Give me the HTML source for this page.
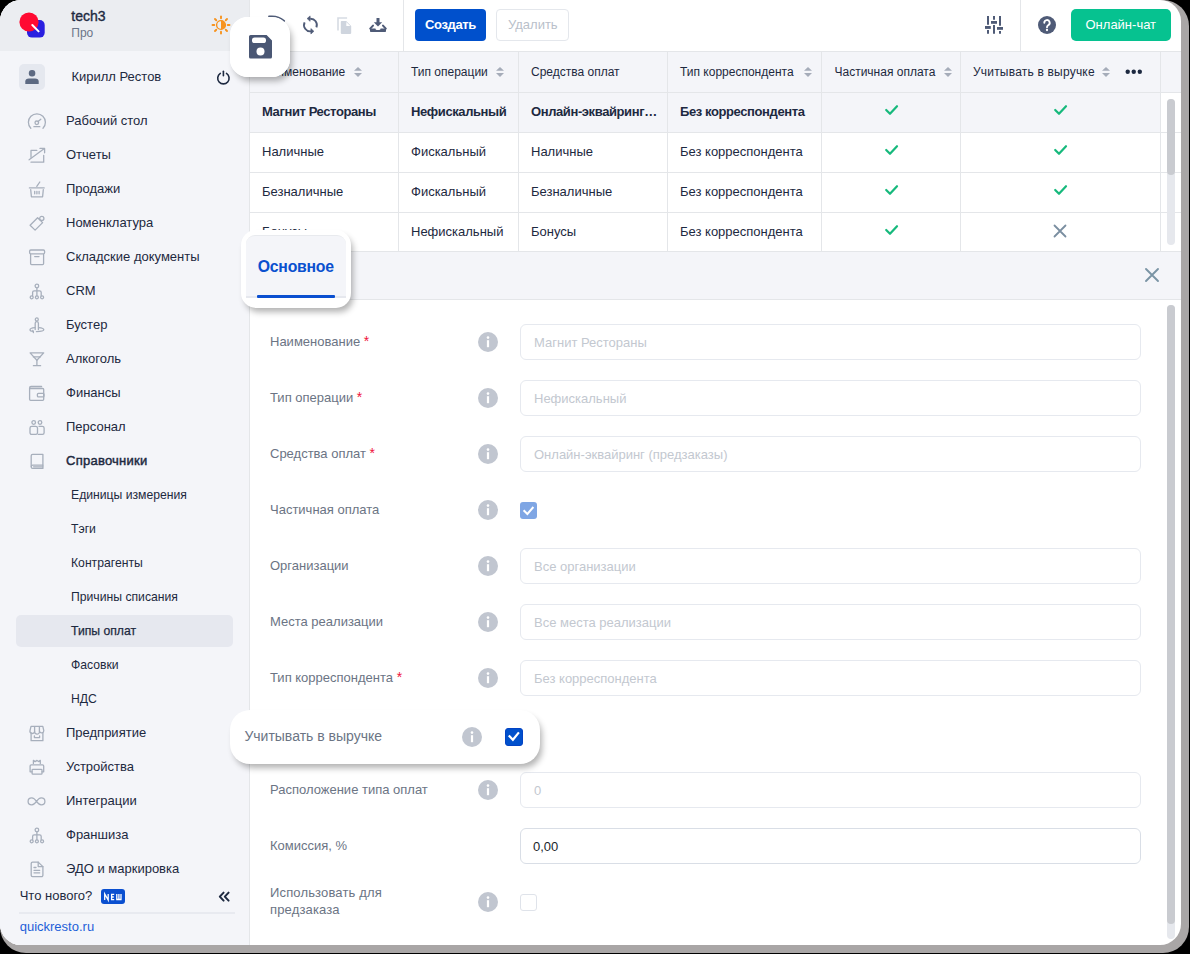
<!DOCTYPE html>
<html><head><meta charset="utf-8"><style>
*{box-sizing:border-box;margin:0;padding:0}
html,body{width:1190px;height:954px;overflow:hidden;background:#000;font-family:"Liberation Sans",sans-serif;}
#shadow{position:absolute;left:0;top:0;width:1189px;height:953px;border-radius:26px;background:#a9a6a6}
#win{position:absolute;left:0;top:0;width:1181px;height:945px;border-radius:21px;background:#fff;overflow:hidden}
.t{position:absolute;white-space:nowrap;line-height:13px;font-size:13px;color:#1d2940}
svg{position:absolute;overflow:visible}
.bx{position:absolute}
</style></head><body><div id="shadow"></div><div id="win"><div class="bx" style="left:0px;top:0px;width:249px;height:945px;background:#f4f5f9"></div>
<div class="bx" style="left:249px;top:0px;width:1px;height:945px;background:#e4e6e9"></div>
<div class="bx" style="left:0px;top:0px;width:249px;height:51px;background:#ebedf1"></div>
<svg style="left:0px;top:0px" width="60" height="48" viewBox="0 0 60 48"><rect x="27" y="20" width="17.7" height="17.6" rx="5" fill="#2a1fe0"/><circle cx="29" cy="22" r="9.6" fill="#ff0a32"/><line x1="32.3" y1="25" x2="38.6" y2="31.4" stroke="#fff" stroke-width="2" stroke-linecap="round"/></svg>
<div class="t" style="left:71.30px;top:9.149px;font-size:14px;line-height:14px;color:#1d2940;font-weight:normal;-webkit-text-stroke:0.35px #1d2940;">tech3</div>
<div class="t" style="left:71.30px;top:26.842px;font-size:12px;line-height:12px;color:#6b7588;font-weight:normal;">Про</div>
<svg style="left:210.9px;top:14.9px" width="20" height="20" viewBox="0 0 20 20"><circle cx="10" cy="10" r="4.4" fill="none" stroke="#f7931e" stroke-width="1.4"/><path d="M10 5.6 A4.4 4.4 0 0 1 10 14.4 Z" fill="#f7931e"/><line x1="16.70" y1="10.00" x2="18.50" y2="10.00" stroke="#f7931e" stroke-width="1.9" stroke-linecap="round"/><line x1="14.74" y1="14.74" x2="16.01" y2="16.01" stroke="#f7931e" stroke-width="1.9" stroke-linecap="round"/><line x1="10.00" y1="16.70" x2="10.00" y2="18.50" stroke="#f7931e" stroke-width="1.9" stroke-linecap="round"/><line x1="5.26" y1="14.74" x2="3.99" y2="16.01" stroke="#f7931e" stroke-width="1.9" stroke-linecap="round"/><line x1="3.30" y1="10.00" x2="1.50" y2="10.00" stroke="#f7931e" stroke-width="1.9" stroke-linecap="round"/><line x1="5.26" y1="5.26" x2="3.99" y2="3.99" stroke="#f7931e" stroke-width="1.9" stroke-linecap="round"/><line x1="10.00" y1="3.30" x2="10.00" y2="1.50" stroke="#f7931e" stroke-width="1.9" stroke-linecap="round"/><line x1="14.74" y1="5.26" x2="16.01" y2="3.99" stroke="#f7931e" stroke-width="1.9" stroke-linecap="round"/></svg>
<div class="bx" style="left:19.4px;top:64.2px;width:25.4px;height:25.7px;background:#e5e8ef;border-radius:5px"></div>
<svg style="left:19px;top:64px" width="26" height="26" viewBox="0 0 26 26"><rect x="9.8" y="6" width="6.5" height="6.4" rx="3" fill="#5d6a82"/><path d="M6.3 19.9 V17.6 Q6.3 14.5 10 14.5 H16 Q19.7 14.5 19.7 17.6 V19.9 Z" fill="#5d6a82"/></svg>
<div class="t" style="left:71.40px;top:69.995px;font-size:13px;line-height:13px;color:#1d2940;font-weight:normal;">Кирилл Рестов</div>
<svg style="left:214px;top:69px" width="18" height="18" viewBox="0 0 18 18"><path d="M6.3 4.4 A5.7 5.7 0 1 0 12.5 4.4" fill="none" stroke="#1d2940" stroke-width="1.6" stroke-linecap="round"/><line x1="9.4" y1="2.3" x2="9.4" y2="6.7" stroke="#1d2940" stroke-width="1.6" stroke-linecap="round"/></svg>
<svg style="left:27px;top:111px" width="20" height="20" viewBox="0 0 20 20"><path d="M3.8 17.2 A8.5 8.5 0 1 1 16 17.2" fill="none" stroke="#a7afbc" stroke-width="1.3" stroke-linecap="round" stroke-linejoin="round"/><circle cx="9.8" cy="11.8" r="1.8" fill="none" stroke="#a7afbc" stroke-width="1.3" stroke-linecap="round" stroke-linejoin="round"/><line x1="11.1" y1="10.5" x2="13.8" y2="8.2" fill="none" stroke="#a7afbc" stroke-width="1.3" stroke-linecap="round" stroke-linejoin="round"/><line x1="6.9" y1="15.7" x2="12.8" y2="15.7" fill="none" stroke="#a7afbc" stroke-width="1.3" stroke-linecap="round" stroke-linejoin="round"/></svg>
<div class="t" style="left:66.00px;top:113.995px;font-size:13px;line-height:13px;color:#1d2940;font-weight:normal;">Рабочий стол</div>
<svg style="left:27px;top:145px" width="20" height="20" viewBox="0 0 20 20"><path d="M4 12.3 V5.4 H9.8" fill="none" stroke="#a7afbc" stroke-width="1.3" stroke-linecap="round" stroke-linejoin="round"/><path d="M4 17.2 H16.7 V10.3" fill="none" stroke="#a7afbc" stroke-width="1.3" stroke-linecap="round" stroke-linejoin="round"/><path d="M2.1 14.8 L17.4 3.6" fill="none" stroke="#a7afbc" stroke-width="1.3" stroke-linecap="round" stroke-linejoin="round"/><path d="M13 3.4 H17.6 V7.8" fill="none" stroke="#a7afbc" stroke-width="1.3" stroke-linecap="round" stroke-linejoin="round"/></svg>
<div class="t" style="left:66.00px;top:147.995px;font-size:13px;line-height:13px;color:#1d2940;font-weight:normal;">Отчеты</div>
<svg style="left:27px;top:179px" width="20" height="20" viewBox="0 0 20 20"><path d="M2.4 8.9 H17.2" fill="none" stroke="#a7afbc" stroke-width="1.3" stroke-linecap="round" stroke-linejoin="round" stroke-width="2"/><path d="M3.7 10.6 L4.4 17.8 H15.6 L16.3 10.6" fill="none" stroke="#a7afbc" stroke-width="1.3" stroke-linecap="round" stroke-linejoin="round"/><path d="M9.8 7.4 L12.8 3" fill="none" stroke="#a7afbc" stroke-width="1.3" stroke-linecap="round" stroke-linejoin="round"/><path d="M7.7 12.3 V14.8 M9.9 12.3 V14.8 M12.1 12.3 V14.8" fill="none" stroke="#a7afbc" stroke-width="1.3" stroke-linecap="round" stroke-linejoin="round"/></svg>
<div class="t" style="left:66.00px;top:181.995px;font-size:13px;line-height:13px;color:#1d2940;font-weight:normal;">Продажи</div>
<svg style="left:27px;top:213px" width="20" height="20" viewBox="0 0 20 20"><path d="M3.1 12.3 L10.6 4.8 L15.6 9.6 L8.1 17.1 Z" fill="none" stroke="#a7afbc" stroke-width="1.3" stroke-linecap="round" stroke-linejoin="round"/><circle cx="14.8" cy="5.4" r="2.1" fill="none" stroke="#a7afbc" stroke-width="1.3" stroke-linecap="round" stroke-linejoin="round"/></svg>
<div class="t" style="left:66.00px;top:215.995px;font-size:13px;line-height:13px;color:#1d2940;font-weight:normal;">Номенклатура</div>
<svg style="left:27px;top:247px" width="20" height="20" viewBox="0 0 20 20"><rect x="2.6" y="3" width="15" height="3.8" rx="1.2" fill="none" stroke="#a7afbc" stroke-width="1.3" stroke-linecap="round" stroke-linejoin="round"/><path d="M3.6 7.4 V16.6 A1 1 0 0 0 4.6 17.6 H15.6 A1 1 0 0 0 16.6 16.6 V7.4" fill="none" stroke="#a7afbc" stroke-width="1.3" stroke-linecap="round" stroke-linejoin="round"/><line x1="7.7" y1="9.6" x2="12" y2="9.6" fill="none" stroke="#a7afbc" stroke-width="1.3" stroke-linecap="round" stroke-linejoin="round"/></svg>
<div class="t" style="left:66.00px;top:249.995px;font-size:13px;line-height:13px;color:#1d2940;font-weight:normal;">Складские документы</div>
<svg style="left:27px;top:281px" width="20" height="20" viewBox="0 0 20 20"><circle cx="9.9" cy="5" r="1.8" fill="none" stroke="#a7afbc" stroke-width="1.3" stroke-linecap="round" stroke-linejoin="round"/><path d="M9.9 6.8 V8.6 M5.6 14.6 V11.4 Q5.6 9.8 7.2 9.8 H12.6 Q14.2 9.8 14.2 11.4 V14.6 M9.9 8.6 V14.6" fill="none" stroke="#a7afbc" stroke-width="1.3" stroke-linecap="round" stroke-linejoin="round"/><circle cx="4.7" cy="16.3" r="1.5" fill="none" stroke="#a7afbc" stroke-width="1.3" stroke-linecap="round" stroke-linejoin="round"/><circle cx="9.9" cy="16.3" r="1.5" fill="none" stroke="#a7afbc" stroke-width="1.3" stroke-linecap="round" stroke-linejoin="round"/><circle cx="15.1" cy="16.3" r="1.5" fill="none" stroke="#a7afbc" stroke-width="1.3" stroke-linecap="round" stroke-linejoin="round"/></svg>
<div class="t" style="left:66.00px;top:283.995px;font-size:13px;line-height:13px;color:#1d2940;font-weight:normal;">CRM</div>
<svg style="left:27px;top:315px" width="20" height="20" viewBox="0 0 20 20"><circle cx="9.8" cy="4.4" r="1.5" fill="none" stroke="#a7afbc" stroke-width="1.3" stroke-linecap="round" stroke-linejoin="round"/><path d="M8.2 14.6 V8.2 Q8.2 6.6 9.8 6.6 Q11.4 6.6 11.4 8.2 V14.6" fill="none" stroke="#a7afbc" stroke-width="1.3" stroke-linecap="round" stroke-linejoin="round"/><path d="M8 12.6 C4.6 12.8 3 13.6 3 14.8 C3 15.8 4.6 16.4 6.4 16.4 M11.6 12.6 C15 12.8 16.8 13.6 16.8 14.8 C16.8 15.8 14.6 16.6 9.4 16.6" fill="none" stroke="#a7afbc" stroke-width="1.3" stroke-linecap="round" stroke-linejoin="round"/><path d="M5.8 15.4 L6.4 17.6" fill="none" stroke="#a7afbc" stroke-width="1.3" stroke-linecap="round" stroke-linejoin="round"/></svg>
<div class="t" style="left:66.00px;top:317.995px;font-size:13px;line-height:13px;color:#1d2940;font-weight:normal;">Бустер</div>
<svg style="left:27px;top:349px" width="20" height="20" viewBox="0 0 20 20"><path d="M3.1 3.9 H16.7 L9.9 11.3 Z" fill="none" stroke="#a7afbc" stroke-width="1.3" stroke-linecap="round" stroke-linejoin="round"/><path d="M6.4 7.9 H13.3" fill="none" stroke="#a7afbc" stroke-width="1.3" stroke-linecap="round" stroke-linejoin="round"/><path d="M9.9 11.3 V16.4 M6.4 16.7 H13.6" fill="none" stroke="#a7afbc" stroke-width="1.3" stroke-linecap="round" stroke-linejoin="round"/></svg>
<div class="t" style="left:66.00px;top:351.995px;font-size:13px;line-height:13px;color:#1d2940;font-weight:normal;">Алкоголь</div>
<svg style="left:27px;top:383px" width="20" height="20" viewBox="0 0 20 20"><path d="M14.6 3.5 H4 A1.4 1.4 0 0 0 2.6 4.9 V16.3 A1 1 0 0 0 3.6 17.3 H15.7 A1 1 0 0 0 16.7 16.3 V6.5 A1 1 0 0 0 15.7 5.5 H3.2" fill="none" stroke="#a7afbc" stroke-width="1.3" stroke-linecap="round" stroke-linejoin="round"/><rect x="10.4" y="10.3" width="6.6" height="3.6" rx="1" fill="none" stroke="#a7afbc" stroke-width="1.3" stroke-linecap="round" stroke-linejoin="round"/></svg>
<div class="t" style="left:66.00px;top:385.995px;font-size:13px;line-height:13px;color:#1d2940;font-weight:normal;">Финансы</div>
<svg style="left:27px;top:417px" width="20" height="20" viewBox="0 0 20 20"><circle cx="6.7" cy="5.5" r="1.8" fill="none" stroke="#a7afbc" stroke-width="1.3" stroke-linecap="round" stroke-linejoin="round"/><circle cx="13" cy="5.5" r="1.8" fill="none" stroke="#a7afbc" stroke-width="1.3" stroke-linecap="round" stroke-linejoin="round"/><path d="M4.8 9.3 H8.7 A1.8 1.8 0 0 1 10.5 11.1 V15.8 A1.6 1.6 0 0 1 8.9 17.4 H4.6 A1.6 1.6 0 0 1 3 15.8 V11.1 A1.8 1.8 0 0 1 4.8 9.3 Z" fill="none" stroke="#a7afbc" stroke-width="1.3" stroke-linecap="round" stroke-linejoin="round"/><path d="M12 9.3 H15.3 A1.8 1.8 0 0 1 17.1 11.1 V15.8 A1.6 1.6 0 0 1 15.5 17.4 H11.4" fill="none" stroke="#a7afbc" stroke-width="1.3" stroke-linecap="round" stroke-linejoin="round"/></svg>
<div class="t" style="left:66.00px;top:419.995px;font-size:13px;line-height:13px;color:#1d2940;font-weight:normal;">Персонал</div>
<svg style="left:27px;top:451px" width="20" height="20" viewBox="0 0 20 20"><path d="M15.9 3.3 H5.6 A1.4 1.4 0 0 0 4.2 4.7 V16 A1.4 1.4 0 0 0 5.6 17.4 H15.9 V3.3 Z" fill="none" stroke="#a7afbc" stroke-width="1.3" stroke-linecap="round" stroke-linejoin="round"/><path d="M4.3 15.4 A1.4 1.4 0 0 1 5.7 14.2 H15.8 M6.6 15.8 H15.8" fill="none" stroke="#a7afbc" stroke-width="1.3" stroke-linecap="round" stroke-linejoin="round"/></svg>
<div class="t" style="left:66.00px;top:453.995px;font-size:13px;line-height:13px;color:#1d2940;font-weight:normal;letter-spacing:0.25px;-webkit-text-stroke:0.45px #1d2940;">Справочники</div>
<div class="t" style="left:71.00px;top:488.673px;font-size:12.2px;line-height:12.2px;color:#1d2940;font-weight:normal;">Единицы измерения</div>
<div class="t" style="left:71.00px;top:522.673px;font-size:12.2px;line-height:12.2px;color:#1d2940;font-weight:normal;">Тэги</div>
<div class="t" style="left:71.00px;top:556.673px;font-size:12.2px;line-height:12.2px;color:#1d2940;font-weight:normal;">Контрагенты</div>
<div class="t" style="left:71.00px;top:590.673px;font-size:12.2px;line-height:12.2px;color:#1d2940;font-weight:normal;">Причины списания</div>
<div class="bx" style="left:16px;top:615px;width:217px;height:32px;background:#e6e8ef;border-radius:5px"></div>
<div class="t" style="left:71.00px;top:624.673px;font-size:12.2px;line-height:12.2px;color:#1d2940;font-weight:normal;-webkit-text-stroke:0.25px #1d2940;">Типы оплат</div>
<div class="t" style="left:71.00px;top:658.673px;font-size:12.2px;line-height:12.2px;color:#1d2940;font-weight:normal;">Фасовки</div>
<div class="t" style="left:71.00px;top:692.673px;font-size:12.2px;line-height:12.2px;color:#1d2940;font-weight:normal;">НДС</div>
<svg style="left:27px;top:723px" width="20" height="20" viewBox="0 0 20 20"><path d="M4 3.4 H15.8 L16.8 7.6 A2.2 2.2 0 0 1 12.6 8.6 A2.4 2.4 0 0 1 7.6 8.6 A2.2 2.2 0 0 1 3 7.6 Z" fill="none" stroke="#a7afbc" stroke-width="1.3" stroke-linecap="round" stroke-linejoin="round"/><path d="M4.1 9.8 V17.7 H15.9 V9.8" fill="none" stroke="#a7afbc" stroke-width="1.3" stroke-linecap="round" stroke-linejoin="round"/><path d="M7.6 3.6 V8.4 M12.4 3.6 V8.4 M7.4 13 V14.6 H12.6 V13" fill="none" stroke="#a7afbc" stroke-width="1.3" stroke-linecap="round" stroke-linejoin="round"/></svg>
<div class="t" style="left:66.00px;top:725.995px;font-size:13px;line-height:13px;color:#1d2940;font-weight:normal;">Предприятие</div>
<svg style="left:27px;top:757px" width="20" height="20" viewBox="0 0 20 20"><path d="M6.4 6.4 V3.4 L8.2 4.6 L10 3.4 L11.6 4.6 L13.3 3.4 V6.4" fill="none" stroke="#a7afbc" stroke-width="1.3" stroke-linecap="round" stroke-linejoin="round"/><path d="M5 14.8 H3.1 V9 A1.2 1.2 0 0 1 4.3 7.8 H15.5 A1.2 1.2 0 0 1 16.7 9 V14.8 H15" fill="none" stroke="#a7afbc" stroke-width="1.3" stroke-linecap="round" stroke-linejoin="round"/><rect x="5.1" y="12.3" width="9.9" height="4.9" rx="0.8" fill="none" stroke="#a7afbc" stroke-width="1.3" stroke-linecap="round" stroke-linejoin="round"/></svg>
<div class="t" style="left:66.00px;top:759.995px;font-size:13px;line-height:13px;color:#1d2940;font-weight:normal;">Устройства</div>
<svg style="left:27px;top:791px" width="20" height="20" viewBox="0 0 20 20"><path d="M9.5 10.4 C7.6 7.6 6.4 6.9 4.8 6.9 C2.7 6.9 1.1 8.4 1.1 10.4 C1.1 12.4 2.7 13.8 4.8 13.8 C6.4 13.8 7.6 13.2 9.5 10.4 C11.4 7.6 12.6 6.9 14.2 6.9 C16.3 6.9 17.9 8.4 17.9 10.4 C17.9 12.4 16.3 13.8 14.2 13.8 C12.6 13.8 11.4 13.2 9.5 10.4 Z" fill="none" stroke="#a7afbc" stroke-width="1.3" stroke-linecap="round" stroke-linejoin="round"/></svg>
<div class="t" style="left:66.00px;top:793.995px;font-size:13px;line-height:13px;color:#1d2940;font-weight:normal;">Интеграции</div>
<svg style="left:27px;top:825px" width="20" height="20" viewBox="0 0 20 20"><circle cx="9.9" cy="5" r="1.8" fill="none" stroke="#a7afbc" stroke-width="1.3" stroke-linecap="round" stroke-linejoin="round"/><path d="M9.9 6.8 V8.6 M5.6 14.6 V11.4 Q5.6 9.8 7.2 9.8 H12.6 Q14.2 9.8 14.2 11.4 V14.6 M9.9 8.6 V14.6" fill="none" stroke="#a7afbc" stroke-width="1.3" stroke-linecap="round" stroke-linejoin="round"/><circle cx="4.7" cy="16.3" r="1.5" fill="none" stroke="#a7afbc" stroke-width="1.3" stroke-linecap="round" stroke-linejoin="round"/><circle cx="9.9" cy="16.3" r="1.5" fill="none" stroke="#a7afbc" stroke-width="1.3" stroke-linecap="round" stroke-linejoin="round"/><circle cx="15.1" cy="16.3" r="1.5" fill="none" stroke="#a7afbc" stroke-width="1.3" stroke-linecap="round" stroke-linejoin="round"/></svg>
<div class="t" style="left:66.00px;top:827.995px;font-size:13px;line-height:13px;color:#1d2940;font-weight:normal;">Франшиза</div>
<svg style="left:27px;top:859px" width="20" height="20" viewBox="0 0 20 20"><path d="M11.2 3.1 H5.6 A1.4 1.4 0 0 0 4.2 4.5 V16.2 A1.4 1.4 0 0 0 5.6 17.6 H14.5 A1.4 1.4 0 0 0 15.9 16.2 V7.6 Z" fill="none" stroke="#a7afbc" stroke-width="1.3" stroke-linecap="round" stroke-linejoin="round"/><path d="M11.2 3.1 V7.6 H15.9" fill="none" stroke="#a7afbc" stroke-width="1.3" stroke-linecap="round" stroke-linejoin="round"/><path d="M7 8.5 H9 M7 11.3 H12.7 M7 13.8 H12.7" fill="none" stroke="#a7afbc" stroke-width="1.3" stroke-linecap="round" stroke-linejoin="round"/></svg>
<div class="t" style="left:66.00px;top:861.995px;font-size:13px;line-height:13px;color:#1d2940;font-weight:normal;">ЭДО и маркировка</div>
<div class="bx" style="left:0px;top:880px;width:249px;height:65px;background:#f4f5f9"></div>
<div class="t" style="left:19.70px;top:888.995px;font-size:13px;line-height:13px;color:#1d2940;font-weight:normal;">Что нового?</div>
<div class="bx" style="left:101px;top:889px;width:24px;height:15px;background:#0a4fd0;border-radius:3px"></div>
<svg style="left:101px;top:889px" width="24" height="15" viewBox="0 0 24 15"><path d="M3.7 11 V5 L7.2 11 V5 M10.6 5 V11 M10 5.4 H13.2 M10 8 H12.8 M10 10.6 H13.2 M15.8 5 V11 M17.9 5 V10 M20 5 V11 M15.2 10.5 H20.6" fill="none" stroke="#fff" stroke-width="1.3"/></svg>
<svg style="left:216px;top:889px" width="16" height="14" viewBox="0 0 16 14"><path d="M7.6 3.6 L3.8 7.6 L7.6 11.6 M12.6 3.6 L8.8 7.6 L12.6 11.6" fill="none" stroke="#1d2940" stroke-width="2" stroke-linecap="round" stroke-linejoin="round"/></svg>
<div class="bx" style="left:19px;top:912px;width:216px;height:2px;background:#e8eaf0"></div>
<div class="t" style="left:19.70px;top:919.995px;font-size:13px;line-height:13px;color:#1d5fd8;font-weight:normal;">quickresto.ru</div>
<svg style="left:301px;top:15px" width="20" height="20" viewBox="0 0 20 20"><path d="M9.2 3.7 A6.3 6.3 0 0 1 15.4 12.3" fill="none" stroke="#4f5b77" stroke-width="1.9"/><path d="M6.1 3.6 L9.1 0.9 V6.3 Z" fill="#4f5b77" stroke="#4f5b77" stroke-width="0.6" stroke-linejoin="round"/><path d="M3.6 7.4 A6.3 6.3 0 0 0 10 16.3" fill="none" stroke="#4f5b77" stroke-width="1.9"/><path d="M12.9 16.3 L9.9 13.6 V19 Z" fill="#4f5b77" stroke="#4f5b77" stroke-width="0.6" stroke-linejoin="round"/></svg>
<svg style="left:334px;top:16px" width="20" height="20" viewBox="0 0 20 20"><path d="M4 14.4 V2 H13.1" fill="none" stroke="#d6dbe3" stroke-width="1.6"/><path d="M7.6 5.1 H12.2 L17.2 10.1 V17.1 A0.8 0.8 0 0 1 16.4 17.9 H7.6 A0.8 0.8 0 0 1 6.8 17.1 V5.9 A0.8 0.8 0 0 1 7.6 5.1 Z" fill="#cfd5de"/><path d="M12.3 6 V10 H16.3 Z" fill="#fff"/></svg>
<svg style="left:368px;top:15px" width="20" height="20" viewBox="0 0 20 20"><rect x="8.5" y="3" width="3" height="5" fill="#4f5b77"/><path d="M5.8 7.3 H14.2 L10 11.4 Z" fill="#4f5b77"/><path d="M5 10.6 L2.2 13.6 M15 10.6 L17.8 13.6" stroke="#4f5b77" stroke-width="2" stroke-linecap="round"/><path d="M2 13.4 H7.4 Q7.6 15 9 15 H11 Q12.4 15 12.6 13.4 H18 V16.3 A0.8 0.8 0 0 1 17.2 17.1 H2.8 A0.8 0.8 0 0 1 2 16.3 Z" fill="#4f5b77"/></svg>
<div class="bx" style="left:403px;top:0px;width:1px;height:51px;background:#e4e6e9"></div>
<div class="bx" style="left:415px;top:9px;width:71px;height:32px;background:#0050cc;border-radius:4px"></div>
<div class="t" style="left:425.00px;top:17.995px;font-size:13px;line-height:13px;color:#fff;font-weight:bold;letter-spacing:-0.35px;">Создать</div>
<div class="bx" style="left:496px;top:9px;width:73px;height:32px;border:1px solid #e4e7ec;border-radius:4px;background:#fff"></div>
<div class="t" style="left:508.00px;top:17.995px;font-size:13px;line-height:13px;color:#b9bfca;font-weight:normal;">Удалить</div>
<svg style="left:984px;top:15px" width="20" height="20" viewBox="0 0 20 20"><path d="M4 1 V9.8 M4 15.1 V18.7 M10 1 V4.7 M10 10 V18.7 M16 1 V10.7 M16 16 V18.7" stroke="#4f5b77" stroke-width="2"/><rect x="1" y="11" width="5.8" height="2.9" fill="#4f5b77"/><rect x="7" y="6" width="6" height="2.8" fill="#4f5b77"/><rect x="13" y="12" width="6" height="2.8" fill="#4f5b77"/></svg>
<div class="bx" style="left:1020px;top:0px;width:1px;height:51px;background:#e4e6e9"></div>
<svg style="left:1038px;top:16px" width="18" height="18" viewBox="0 0 18 18"><circle cx="9" cy="9" r="9" fill="#4f5b77"/><path d="M6.3 6.8 A2.7 2.7 0 1 1 10.2 9.2 C9.2 9.8 9 10.2 9 11.2" fill="none" stroke="#fff" stroke-width="1.9" stroke-linecap="round"/><circle cx="9" cy="14" r="1.15" fill="#fff"/></svg>
<div class="bx" style="left:1071px;top:9px;width:100px;height:32px;background:#06c290;border-radius:5px"></div>
<div class="t" style="left:1085.50px;top:17.995px;font-size:13px;line-height:13px;color:#fff;font-weight:normal;">Онлайн-чат</div>
<div class="bx" style="left:250px;top:51px;width:931px;height:1px;background:#e4e6e9"></div>
<div class="bx" style="left:250px;top:52px;width:931px;height:40px;background:#f4f5f9"></div>
<div class="bx" style="left:250px;top:93px;width:910px;height:39px;background:#f4f5f9"></div>
<div class="bx" style="left:250px;top:92px;width:931px;height:1px;background:#e4e6e9"></div>
<div class="bx" style="left:250px;top:132px;width:931px;height:1px;background:#e4e6e9"></div>
<div class="bx" style="left:250px;top:172px;width:931px;height:1px;background:#e4e6e9"></div>
<div class="bx" style="left:250px;top:212px;width:931px;height:1px;background:#e4e6e9"></div>
<div class="bx" style="left:398px;top:52px;width:1px;height:200px;background:#e4e6e9"></div>
<div class="bx" style="left:518px;top:52px;width:1px;height:200px;background:#e4e6e9"></div>
<div class="bx" style="left:667px;top:52px;width:1px;height:200px;background:#e4e6e9"></div>
<div class="bx" style="left:821px;top:52px;width:1px;height:200px;background:#e4e6e9"></div>
<div class="bx" style="left:960px;top:52px;width:1px;height:200px;background:#e4e6e9"></div>
<div class="bx" style="left:1160px;top:52px;width:1px;height:200px;background:#e4e6e9"></div>
<div class="t" style="left:262.00px;top:65.842px;font-size:12px;line-height:12px;color:#1d2940;font-weight:normal;">Наименование</div>
<svg style="left:354px;top:66px" width="8" height="12" viewBox="0 0 8 12"><path d="M0 4.8 L4 1 L8 4.8 Z M0 7.1 L8 7.1 L4 10.9 Z" fill="#a5acb9"/></svg>
<div class="t" style="left:411.00px;top:65.842px;font-size:12px;line-height:12px;color:#1d2940;font-weight:normal;">Тип операции</div>
<svg style="left:496px;top:66px" width="8" height="12" viewBox="0 0 8 12"><path d="M0 4.8 L4 1 L8 4.8 Z M0 7.1 L8 7.1 L4 10.9 Z" fill="#a5acb9"/></svg>
<div class="t" style="left:531.00px;top:65.842px;font-size:12px;line-height:12px;color:#1d2940;font-weight:normal;">Средства оплат</div>
<div class="t" style="left:680.00px;top:65.842px;font-size:12px;line-height:12px;color:#1d2940;font-weight:normal;">Тип корреспондента</div>
<svg style="left:803.5px;top:66px" width="8" height="12" viewBox="0 0 8 12"><path d="M0 4.8 L4 1 L8 4.8 Z M0 7.1 L8 7.1 L4 10.9 Z" fill="#a5acb9"/></svg>
<div class="t" style="left:834.50px;top:65.842px;font-size:12px;line-height:12px;color:#1d2940;font-weight:normal;">Частичная оплата</div>
<svg style="left:944px;top:66px" width="8" height="12" viewBox="0 0 8 12"><path d="M0 4.8 L4 1 L8 4.8 Z M0 7.1 L8 7.1 L4 10.9 Z" fill="#a5acb9"/></svg>
<div class="t" style="left:973.00px;top:65.842px;font-size:12px;line-height:12px;color:#1d2940;font-weight:normal;letter-spacing:0.2px;">Учитывать в выручке</div>
<svg style="left:1102px;top:66px" width="8" height="12" viewBox="0 0 8 12"><path d="M0 4.8 L4 1 L8 4.8 Z M0 7.1 L8 7.1 L4 10.9 Z" fill="#a5acb9"/></svg>
<svg style="left:1124px;top:68px" width="20" height="8" viewBox="0 0 20 8"><circle cx="3.7" cy="3.8" r="2.2" fill="#1d2940"/><circle cx="9.75" cy="3.8" r="2.2" fill="#1d2940"/><circle cx="15.8" cy="3.8" r="2.2" fill="#1d2940"/></svg>
<div class="t" style="left:262.00px;top:104.995px;font-size:13px;line-height:13px;color:#1d2940;font-weight:bold;letter-spacing:-0.4px;">Магнит Рестораны</div>
<div class="t" style="left:411.00px;top:104.995px;font-size:13px;line-height:13px;color:#1d2940;font-weight:bold;letter-spacing:-0.4px;">Нефискальный</div>
<div class="t" style="left:531.00px;top:104.995px;font-size:13px;line-height:13px;color:#1d2940;font-weight:bold;letter-spacing:-0.4px;">Онлайн-эквайринг…</div>
<div class="t" style="left:680.00px;top:104.995px;font-size:13px;line-height:13px;color:#1d2940;font-weight:bold;letter-spacing:-0.4px;">Без корреспондента</div>
<svg style="left:884.5px;top:104px" width="14" height="12" viewBox="0 0 14 12"><path d="M1.2 6 L5 9.8 L12 2.2" fill="none" stroke="#16b97c" stroke-width="2.2" stroke-linecap="round" stroke-linejoin="round"/></svg>
<svg style="left:1053.5px;top:104px" width="14" height="12" viewBox="0 0 14 12"><path d="M1.2 6 L5 9.8 L12 2.2" fill="none" stroke="#16b97c" stroke-width="2.2" stroke-linecap="round" stroke-linejoin="round"/></svg>
<div class="t" style="left:262.00px;top:144.995px;font-size:13px;line-height:13px;color:#1d2940;font-weight:normal;">Наличные</div>
<div class="t" style="left:411.00px;top:144.995px;font-size:13px;line-height:13px;color:#1d2940;font-weight:normal;">Фискальный</div>
<div class="t" style="left:531.00px;top:144.995px;font-size:13px;line-height:13px;color:#1d2940;font-weight:normal;">Наличные</div>
<div class="t" style="left:680.00px;top:144.995px;font-size:13px;line-height:13px;color:#1d2940;font-weight:normal;">Без корреспондента</div>
<svg style="left:884.5px;top:144px" width="14" height="12" viewBox="0 0 14 12"><path d="M1.2 6 L5 9.8 L12 2.2" fill="none" stroke="#16b97c" stroke-width="2.2" stroke-linecap="round" stroke-linejoin="round"/></svg>
<svg style="left:1053.5px;top:144px" width="14" height="12" viewBox="0 0 14 12"><path d="M1.2 6 L5 9.8 L12 2.2" fill="none" stroke="#16b97c" stroke-width="2.2" stroke-linecap="round" stroke-linejoin="round"/></svg>
<div class="t" style="left:262.00px;top:184.995px;font-size:13px;line-height:13px;color:#1d2940;font-weight:normal;">Безналичные</div>
<div class="t" style="left:411.00px;top:184.995px;font-size:13px;line-height:13px;color:#1d2940;font-weight:normal;">Фискальный</div>
<div class="t" style="left:531.00px;top:184.995px;font-size:13px;line-height:13px;color:#1d2940;font-weight:normal;">Безналичные</div>
<div class="t" style="left:680.00px;top:184.995px;font-size:13px;line-height:13px;color:#1d2940;font-weight:normal;">Без корреспондента</div>
<svg style="left:884.5px;top:184px" width="14" height="12" viewBox="0 0 14 12"><path d="M1.2 6 L5 9.8 L12 2.2" fill="none" stroke="#16b97c" stroke-width="2.2" stroke-linecap="round" stroke-linejoin="round"/></svg>
<svg style="left:1053.5px;top:184px" width="14" height="12" viewBox="0 0 14 12"><path d="M1.2 6 L5 9.8 L12 2.2" fill="none" stroke="#16b97c" stroke-width="2.2" stroke-linecap="round" stroke-linejoin="round"/></svg>
<div class="t" style="left:262.00px;top:224.995px;font-size:13px;line-height:13px;color:#1d2940;font-weight:normal;">Бонусы</div>
<div class="t" style="left:411.00px;top:224.995px;font-size:13px;line-height:13px;color:#1d2940;font-weight:normal;">Нефискальный</div>
<div class="t" style="left:531.00px;top:224.995px;font-size:13px;line-height:13px;color:#1d2940;font-weight:normal;">Бонусы</div>
<div class="t" style="left:680.00px;top:224.995px;font-size:13px;line-height:13px;color:#1d2940;font-weight:normal;">Без корреспондента</div>
<svg style="left:884.5px;top:224px" width="14" height="12" viewBox="0 0 14 12"><path d="M1.2 6 L5 9.8 L12 2.2" fill="none" stroke="#16b97c" stroke-width="2.2" stroke-linecap="round" stroke-linejoin="round"/></svg>
<svg style="left:1053px;top:224px" width="14" height="14" viewBox="0 0 14 14"><path d="M1.5 1.5 L12.5 12.5 M12.5 1.5 L1.5 12.5" stroke="#7a8ea0" stroke-width="1.8" stroke-linecap="round"/></svg>
<div class="bx" style="left:1167px;top:99px;width:8px;height:146px;background:#e6e8ed;border-radius:4px"></div>
<div class="bx" style="left:1167px;top:99px;width:8px;height:76px;background:#c9cbd0;border-radius:4px"></div>
<div class="bx" style="left:250px;top:252px;width:931px;height:47px;background:#f4f5f9"></div>
<div class="bx" style="left:250px;top:251px;width:931px;height:1px;background:#e4e6e9"></div>
<div class="bx" style="left:250px;top:299px;width:931px;height:1px;background:#e4e6e9"></div>
<svg style="left:1145px;top:268px" width="14" height="14" viewBox="0 0 14 14"><path d="M1 1 L13 13 M13 1 L1 13" stroke="#7a94a5" stroke-width="1.9" stroke-linecap="round"/></svg>
<div class="t" style="left:270.00px;top:334.995px;font-size:13px;line-height:13px;color:#6b7484;font-weight:normal;">Наименование <span style="color:#f0143c;font-size:14px">*</span></div>
<svg style="left:478px;top:332px" width="20" height="20" viewBox="0 0 20 20"><circle cx="10" cy="10" r="10" fill="#c1c6d0"/><circle cx="10" cy="5.6" r="1.3" fill="#fff"/><rect x="8.9" y="8.2" width="2.2" height="7" fill="#fff"/></svg>
<div class="bx" style="left:520px;top:324px;width:621px;height:36px;border:1px solid #e6e9ef;border-radius:6px;background:#fff"></div>
<div class="t" style="left:534.00px;top:335.995px;font-size:13px;line-height:13px;color:#c3c8d0;font-weight:normal;">Магнит Рестораны</div>
<div class="t" style="left:270.00px;top:390.995px;font-size:13px;line-height:13px;color:#6b7484;font-weight:normal;">Тип операции <span style="color:#f0143c;font-size:14px">*</span></div>
<svg style="left:478px;top:388px" width="20" height="20" viewBox="0 0 20 20"><circle cx="10" cy="10" r="10" fill="#c1c6d0"/><circle cx="10" cy="5.6" r="1.3" fill="#fff"/><rect x="8.9" y="8.2" width="2.2" height="7" fill="#fff"/></svg>
<div class="bx" style="left:520px;top:380px;width:621px;height:36px;border:1px solid #e6e9ef;border-radius:6px;background:#fff"></div>
<div class="t" style="left:534.00px;top:391.995px;font-size:13px;line-height:13px;color:#c3c8d0;font-weight:normal;">Нефискальный</div>
<div class="t" style="left:270.00px;top:446.995px;font-size:13px;line-height:13px;color:#6b7484;font-weight:normal;">Средства оплат <span style="color:#f0143c;font-size:14px">*</span></div>
<svg style="left:478px;top:444px" width="20" height="20" viewBox="0 0 20 20"><circle cx="10" cy="10" r="10" fill="#c1c6d0"/><circle cx="10" cy="5.6" r="1.3" fill="#fff"/><rect x="8.9" y="8.2" width="2.2" height="7" fill="#fff"/></svg>
<div class="bx" style="left:520px;top:436px;width:621px;height:36px;border:1px solid #e6e9ef;border-radius:6px;background:#fff"></div>
<div class="t" style="left:534.00px;top:447.995px;font-size:13px;line-height:13px;color:#c3c8d0;font-weight:normal;">Онлайн-эквайринг (предзаказы)</div>
<div class="t" style="left:270.00px;top:502.995px;font-size:13px;line-height:13px;color:#6b7484;font-weight:normal;">Частичная оплата</div>
<svg style="left:478px;top:500px" width="20" height="20" viewBox="0 0 20 20"><circle cx="10" cy="10" r="10" fill="#c1c6d0"/><circle cx="10" cy="5.6" r="1.3" fill="#fff"/><rect x="8.9" y="8.2" width="2.2" height="7" fill="#fff"/></svg>
<div class="bx" style="left:520px;top:502px;width:17px;height:17px;background:#7fa6e4;border-radius:3px"></div>
<svg style="left:520px;top:502px" width="17" height="17" viewBox="0 0 17 17"><path d="M3.6 8.2 L7.4 12 L13.4 5" fill="none" stroke="#fff" stroke-width="2"/></svg>
<div class="t" style="left:270.00px;top:558.995px;font-size:13px;line-height:13px;color:#6b7484;font-weight:normal;">Организации</div>
<svg style="left:478px;top:556px" width="20" height="20" viewBox="0 0 20 20"><circle cx="10" cy="10" r="10" fill="#c1c6d0"/><circle cx="10" cy="5.6" r="1.3" fill="#fff"/><rect x="8.9" y="8.2" width="2.2" height="7" fill="#fff"/></svg>
<div class="bx" style="left:520px;top:548px;width:621px;height:36px;border:1px solid #e6e9ef;border-radius:6px;background:#fff"></div>
<div class="t" style="left:534.00px;top:559.995px;font-size:13px;line-height:13px;color:#c3c8d0;font-weight:normal;">Все организации</div>
<div class="t" style="left:270.00px;top:614.995px;font-size:13px;line-height:13px;color:#6b7484;font-weight:normal;">Места реализации</div>
<svg style="left:478px;top:612px" width="20" height="20" viewBox="0 0 20 20"><circle cx="10" cy="10" r="10" fill="#c1c6d0"/><circle cx="10" cy="5.6" r="1.3" fill="#fff"/><rect x="8.9" y="8.2" width="2.2" height="7" fill="#fff"/></svg>
<div class="bx" style="left:520px;top:604px;width:621px;height:36px;border:1px solid #e6e9ef;border-radius:6px;background:#fff"></div>
<div class="t" style="left:534.00px;top:615.995px;font-size:13px;line-height:13px;color:#c3c8d0;font-weight:normal;">Все места реализации</div>
<div class="t" style="left:270.00px;top:670.995px;font-size:13px;line-height:13px;color:#6b7484;font-weight:normal;">Тип корреспондента <span style="color:#f0143c;font-size:14px">*</span></div>
<svg style="left:478px;top:668px" width="20" height="20" viewBox="0 0 20 20"><circle cx="10" cy="10" r="10" fill="#c1c6d0"/><circle cx="10" cy="5.6" r="1.3" fill="#fff"/><rect x="8.9" y="8.2" width="2.2" height="7" fill="#fff"/></svg>
<div class="bx" style="left:520px;top:660px;width:621px;height:36px;border:1px solid #e6e9ef;border-radius:6px;background:#fff"></div>
<div class="t" style="left:534.00px;top:671.995px;font-size:13px;line-height:13px;color:#c3c8d0;font-weight:normal;">Без корреспондента</div>
<div class="t" style="left:270.00px;top:782.995px;font-size:13px;line-height:13px;color:#6b7484;font-weight:normal;">Расположение типа оплат</div>
<svg style="left:478px;top:780px" width="20" height="20" viewBox="0 0 20 20"><circle cx="10" cy="10" r="10" fill="#c1c6d0"/><circle cx="10" cy="5.6" r="1.3" fill="#fff"/><rect x="8.9" y="8.2" width="2.2" height="7" fill="#fff"/></svg>
<div class="bx" style="left:520px;top:772px;width:621px;height:36px;border:1px solid #e6e9ef;border-radius:6px;background:#fff"></div>
<div class="t" style="left:534.00px;top:783.995px;font-size:13px;line-height:13px;color:#c3c8d0;font-weight:normal;">0</div>
<div class="t" style="left:270.00px;top:838.995px;font-size:13px;line-height:13px;color:#6b7484;font-weight:normal;">Комиссия, %</div>
<div class="bx" style="left:520px;top:828px;width:621px;height:36px;border:1px solid #d9dee6;border-radius:6px;background:#fff"></div>
<div class="t" style="left:533.00px;top:839.995px;font-size:13px;line-height:13px;color:#1a1f2b;font-weight:normal;">0,00</div>
<div class="t" style="left:270px;top:884px;font-size:13px;line-height:17px;color:#6b7484;letter-spacing:0.15px">Использовать для<br>предзаказа</div>
<svg style="left:478px;top:892px" width="20" height="20" viewBox="0 0 20 20"><circle cx="10" cy="10" r="10" fill="#c1c6d0"/><circle cx="10" cy="5.6" r="1.3" fill="#fff"/><rect x="8.9" y="8.2" width="2.2" height="7" fill="#fff"/></svg>
<div class="bx" style="left:520px;top:894px;width:17px;height:17px;border:1px solid #dfe3ea;border-radius:3px;background:#fff"></div>
<div class="bx" style="left:1167px;top:305px;width:8px;height:634px;background:#e6e8ed;border-radius:4px"></div>
<div class="bx" style="left:1167px;top:305px;width:8px;height:619px;background:#c9cbd0;border-radius:4px"></div>
<div class="bx" style="left:230px;top:17px;width:60px;height:60px;background:#fff;border-radius:18px;box-shadow:3px 5px 6px -1px rgba(0,0,0,0.3)"></div>
<svg style="left:260px;top:10px" width="30" height="20" viewBox="0 0 30 20"><path d="M9 6.4 L12 6.4 A18.6 18.6 0 0 1 24.2 11" fill="none" stroke="#4f5b77" stroke-width="1.8" stroke-linecap="round"/></svg>
<div class="bx" style="left:230px;top:17px;width:60px;height:60px;background:#fff;border-radius:18px"></div>
<svg style="left:248.5px;top:35px" width="23" height="23.5" viewBox="0 0 23 23.5"><path d="M1.6 0 H17.6 L23 5.4 V21.9 A1.6 1.6 0 0 1 21.4 23.5 H1.6 A1.6 1.6 0 0 1 0 21.9 V1.6 A1.6 1.6 0 0 1 1.6 0 Z" fill="#4a5774"/><rect x="3" y="2.4" width="14" height="5.6" rx="2.6" fill="#fff"/><circle cx="11.5" cy="16.4" r="4" fill="#fff"/></svg>
<div class="bx" style="left:241px;top:230px;width:110px;height:78px;background:#fff;border-radius:15px;box-shadow:3px 5px 6px -1px rgba(0,0,0,0.3)"></div>
<div class="bx" style="left:246px;top:235px;width:100px;height:63px;background:#f4f5f9;border-top:1px solid #e8eaee;border-radius:9px 9px 0 0"></div>
<div class="bx" style="left:246px;top:296px;width:100px;height:2px;background:#e6e8ee"></div>
<div class="t" style="left:257.80px;top:258.625px;font-size:15.8px;line-height:15.8px;color:#0a50cf;font-weight:bold;letter-spacing:-0.25px;">Основное</div>
<div class="bx" style="left:257px;top:295px;width:78px;height:3px;background:#0a4fd0;border-radius:1px"></div>
<div class="bx" style="left:230px;top:710px;width:310px;height:54px;background:#fff;border-radius:20px;box-shadow:3px 5px 6px -1px rgba(0,0,0,0.3)"></div>
<div class="t" style="left:244.40px;top:729.149px;font-size:14px;line-height:14px;color:#6b7484;font-weight:normal;">Учитывать в выручке</div>
<svg style="left:462px;top:727px" width="20" height="20" viewBox="0 0 20 20"><circle cx="10" cy="10" r="10" fill="#c1c6d0"/><circle cx="10" cy="5.6" r="1.3" fill="#fff"/><rect x="8.9" y="8.2" width="2.2" height="7" fill="#fff"/></svg>
<div class="bx" style="left:505.3px;top:728.3px;width:18px;height:17.8px;background:#0050cc;border:1px solid #0343c4;border-radius:3px"></div>
<svg style="left:505.3px;top:728.3px" width="18" height="17.8" viewBox="0 0 18 17.8"><path d="M3.8 7.6 L7.9 11.8 L13.9 4.4" fill="none" stroke="#fff" stroke-width="2.2"/></svg></div></body></html>
